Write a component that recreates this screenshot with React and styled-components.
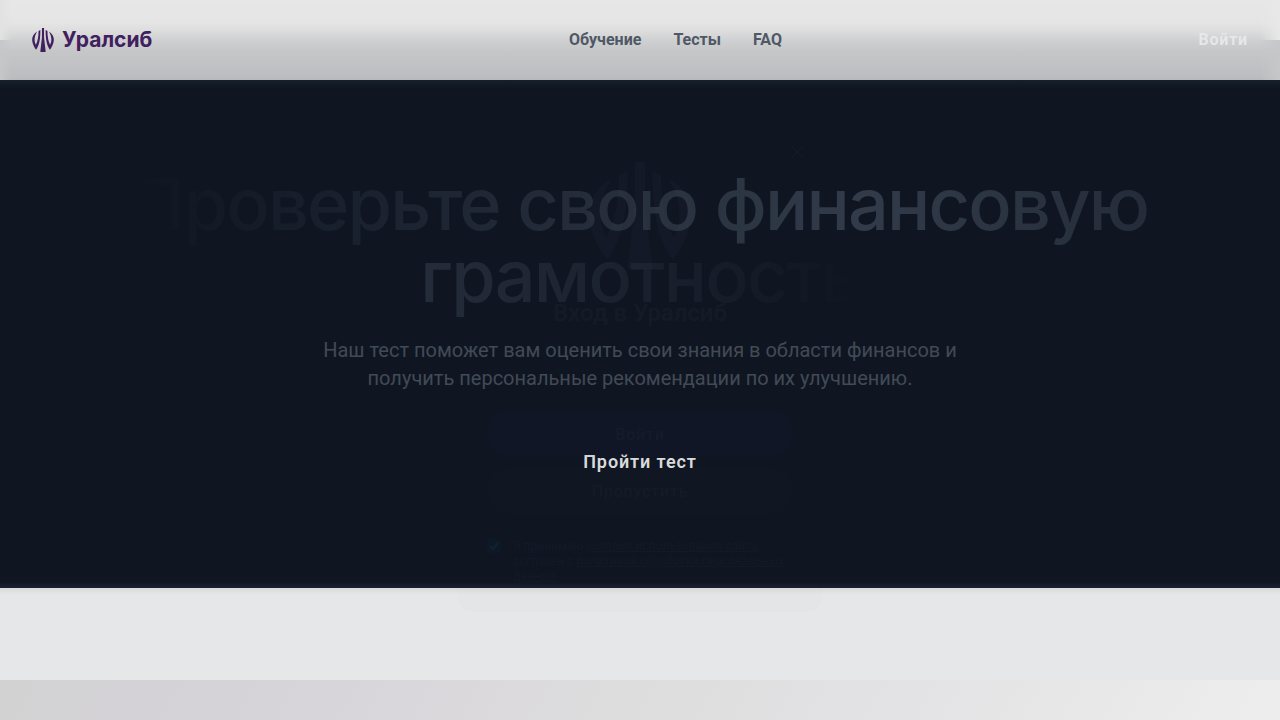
import React from "react";
import styled, { createGlobalStyle } from "styled-components";

const Global = createGlobalStyle`
  * { box-sizing: border-box; }
  body { margin: 0; font-family: Roboto, "Liberation Sans", sans-serif; background: #e6e7e9; overflow: hidden; }
  h1, h2, p { margin: 0; }
  a { color: inherit; }
  button { border: 0; background: none; font-family: inherit; padding: 0; cursor: pointer; }
`;

const Page = styled.div`
  position: relative;
  min-height: 100vh;
  display: flex;
  flex-direction: column;
  overflow: hidden;
`;

const Header = styled.header`
  height: 80px;
  padding: 0 32px;
  display: flex;
  justify-content: space-between;
  align-items: center;
  background:
    linear-gradient(90deg, #e2e2e2, #e4e4e400) 0 0 / 12px 40px no-repeat,
    linear-gradient(90deg, #c6c7c9, #c0c1c400) 0 40px / 12px 40px no-repeat,
    linear-gradient(270deg, #e8e8e8, #eaeaea00) 100% 0 / 20px 40px no-repeat,
    linear-gradient(270deg, #c6c7c9, #c0c1c400) 100% 40px / 20px 40px no-repeat,
    linear-gradient(180deg, #e7e7e7 0, #e5e5e5 22px, #dddddd 31px, #cfd0d2 40px, #c5c6c8 52px, #bfc0c3 70px, #bcbdc0 77px, #b6b8ba 80px);
`;

const Brand = styled.a`
  display: flex;
  align-items: center;
  gap: 8px;
  color: #41205f;
  text-decoration: none;
`;

const BrandMark = styled.svg`
  width: 22px;
  height: 24px;
  display: block;
`;

const Wordmark = styled.span`
  font: 700 21px/24px Inter, sans-serif;
`;

const Nav = styled.nav`
  display: flex;
  gap: 32px;
`;

const NavLink = styled.a`
  font-size: 16px;
  line-height: 24px;
  font-weight: 700;
  color: #4f5865;
  text-decoration: none;
`;

const LoginButton = styled.button`
  font-size: 16px;
  line-height: 24px;
  font-weight: 600;
  letter-spacing: 0.05em;
  color: #e8e8ea;
`;

const Hero = styled.section`
  padding: 88px 32px 112px;
  display: flex;
  flex-direction: column;
  align-items: center;
  text-align: center;
  background:
    linear-gradient(180deg, #16202b, #0f162200) 0 0 / 100% 8px no-repeat,
    linear-gradient(0deg, #1c2130, #0f162200) 0 100% / 100% 6px no-repeat,
    #0f1622;
`;

const Title = styled.h1`
  width: 100%;
  max-width: 1024px;
  font: 500 72px/72px Inter, sans-serif;
  font-optical-sizing: none;
  letter-spacing: -0.025em;
`;

const Shimmer = styled.span`
  color: transparent;
  background: linear-gradient(90deg, #0f1622, #323b49 50%, #0f1622);
  background-clip: text;
  -webkit-background-clip: text;
`;

const Lead = styled.p`
  max-width: 672px;
  margin-top: 24px;
  font-size: 20px;
  line-height: 28px;
  color: #424a56;
`;

const TestButton = styled.button`
  margin-top: 56px;
  font-size: 18px;
  line-height: 28px;
  font-weight: 600;
  letter-spacing: 0.05em;
  color: #dcdddf;
`;

const Band = styled.section`
  height: 92px;
  background:
    linear-gradient(180deg, #d8dcda, #e6e7e900) 0 0 / 100% 7px no-repeat,
    #e6e7e9;
`;

const Strip = styled.section`
  flex: 1;
  min-height: 40px;
  background: linear-gradient(120deg, #d2d2d2 0, #d4d2d7 12%, #d7d5da 26%, #dbd9dc 38%, #dedede 52%, #e3e2e5 70%, #e7e7e7 82%, #ededed 98%);
`;

const Overlay = styled.div`
  position: absolute;
  inset: 0;
  display: flex;
  align-items: center;
  justify-content: center;
  pointer-events: none;
`;

const Dialog = styled.div`
  position: relative;
  width: 366px;
  height: 504px;
  padding: 54px 30px 0;
  border-radius: 16px;
  display: flex;
  flex-direction: column;
  align-items: center;
  background: rgba(70, 76, 88, 0.012);
`;

const Close = styled.button`
  position: absolute;
  top: 36px;
  right: 18px;
  width: 16px;
  height: 16px;
  color: #161d29;
`;

const DialogMark = styled.svg`
  width: 104px;
  height: 108px;
  display: block;
  color: rgba(90, 90, 100, 0.06);
`;

const DialogTitle = styled.h2`
  margin-top: 27px;
  font-size: 24px;
  line-height: 32px;
  font-weight: 600;
  color: rgba(32, 42, 52, 0.3);
`;

const DialogButtons = styled.div`
  margin-top: 82px;
  width: 100%;
  display: flex;
  flex-direction: column;
  gap: 11px;
`;

const DialogButton = styled.button`
  height: 46px;
  border-radius: 23px;
  font-size: 16px;
  font-weight: 500;
  letter-spacing: 0.05em;
  color: rgba(32, 42, 52, 0.25);
  background: ${(p) => (p.$primary ? "rgba(50, 40, 110, 0.05)" : "rgba(70, 60, 70, 0.03)")};
`;

const Consent = styled.div`
  width: 100%;
  margin-top: 25px;
  display: flex;
  gap: 12px;
  font-size: 12px;
  line-height: 15px;
  color: #121a26;
`;

const CheckBox = styled.span`
  flex: none;
  display: grid;
  width: 14px;
  height: 14px;
  color: #14222d;
  & > * { grid-area: 1 / 1; }
`;

const Check = styled.input`
  appearance: none;
  margin: 0;
  width: 14px;
  height: 14px;
  border-radius: 3px;
  background: #0d1926;
`;

function Mark({ as: Svg }) {
  return (
    <Svg viewBox="445 96 310 320" preserveAspectRatio="none" fill="currentColor" aria-hidden="true">
      <path d="M585 96H615V225L638 413Q600 420 562 413L585 225Z" />
      <path d="M517 143C470 170 446 208 447 255C450 310 480 355 503 387C545 325 563 260 563 123L537 135C537 215 525 270 500 320C470 270 480 200 517 143Z" />
      <path d="M683 143C730 170 754 208 753 255C750 310 720 355 697 387C655 325 637 260 637 123L663 135C663 215 675 270 700 320C730 270 720 200 683 143Z" />
    </Svg>
  );
}

export default function App() {
  return (
    <Page>
      <Global />
      <Header>
        <Brand href="#">
          <Mark as={BrandMark} />
          <Wordmark>Уралсиб</Wordmark>
        </Brand>
        <Nav>
          <NavLink href="#learn">Обучение</NavLink>
          <NavLink href="#tests">Тесты</NavLink>
          <NavLink href="#faq">FAQ</NavLink>
        </Nav>
        <LoginButton type="button">Войти</LoginButton>
      </Header>
      <Hero>
        <Title>
          <Shimmer>Проверьте свою финансовую грамотность</Shimmer>
        </Title>
        <Lead>Наш тест поможет вам оценить свои знания в области финансов и получить персональные рекомендации по их улучшению.</Lead>
        <TestButton type="button">Пройти тест</TestButton>
      </Hero>
      <Band />
      <Strip />
      <Overlay>
        <Dialog role="dialog" aria-labelledby="login-title">
          <Close type="button" aria-label="Закрыть">
            <svg width="16" height="16" viewBox="0 0 16 16" fill="none" stroke="currentColor" aria-hidden="true">
              <path d="M2 2L14 14M14 2L2 14" />
            </svg>
          </Close>
          <Mark as={DialogMark} />
          <DialogTitle id="login-title">Вход в Уралсиб</DialogTitle>
          <DialogButtons>
            <DialogButton type="button" $primary>Войти</DialogButton>
            <DialogButton type="button">Пропустить</DialogButton>
          </DialogButtons>
          <Consent>
            <CheckBox>
              <Check id="consent" type="checkbox" defaultChecked />
              <svg width="14" height="14" viewBox="0 0 14 14" fill="none" stroke="currentColor" strokeWidth="2" aria-hidden="true">
                <path d="M3 7L6 10L11 4" />
              </svg>
            </CheckBox>
            <label htmlFor="consent">
              Я принимаю <a href="#terms">условия использования сайта</a>, согласен с <a href="#privacy">политикой обработки персональных данных</a>
            </label>
          </Consent>
        </Dialog>
      </Overlay>
    </Page>
  );
}
